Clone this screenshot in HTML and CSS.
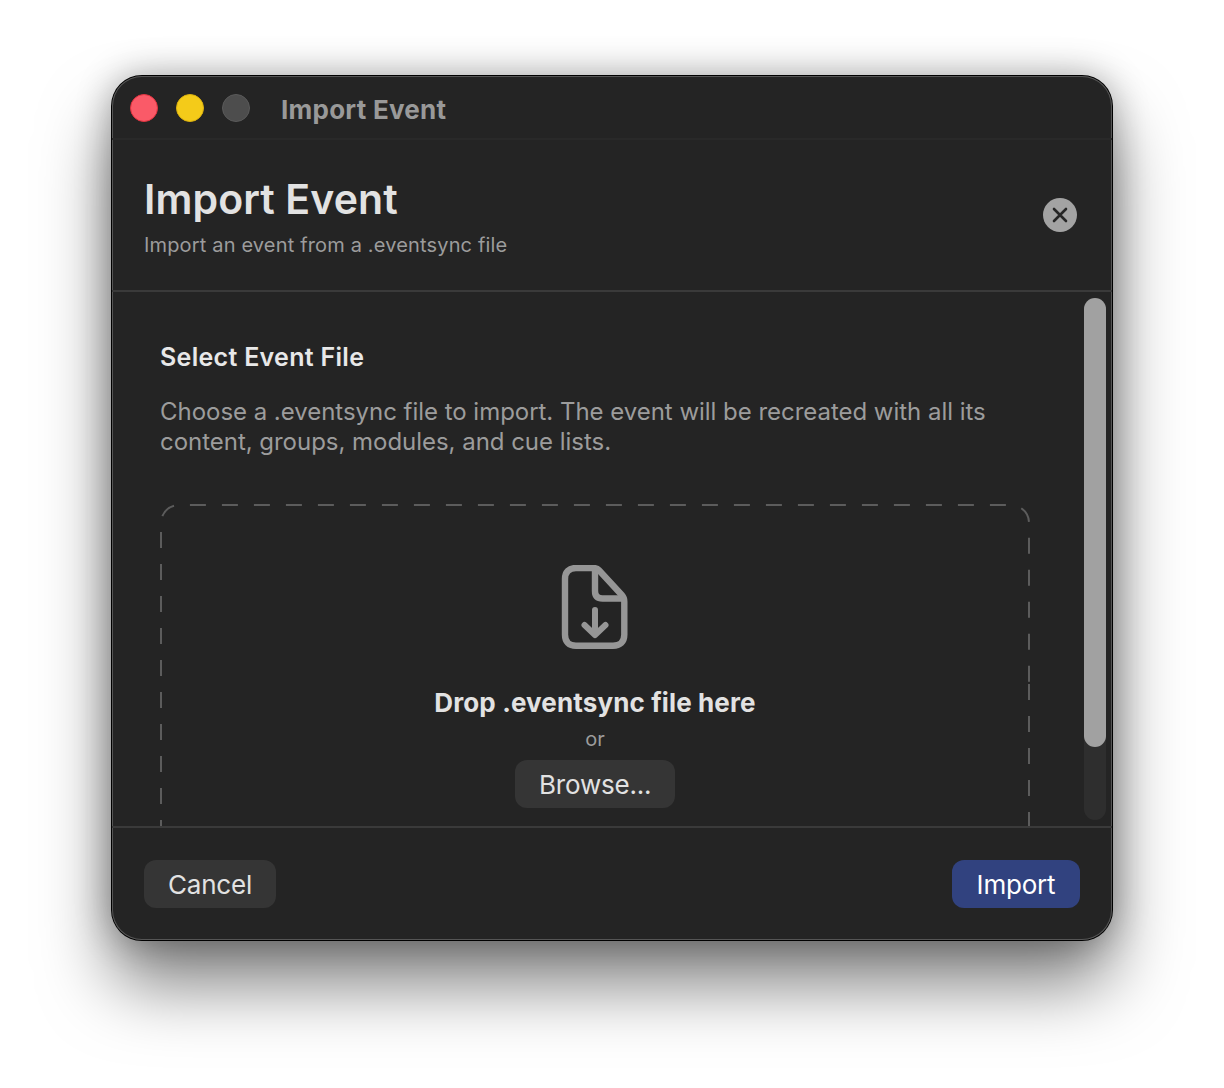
FILE: index.html
```html
<!DOCTYPE html>
<html lang="en">

<head>
    <meta charset="UTF-8" />
    <title>Import Event</title>
    <link rel="stylesheet" href="styles.css">
</head>

<body>
    <div class="window">
        <div class="titlebar">
            <span class="light light-close"></span>
            <span class="light light-min"></span>
            <span class="light light-max"></span>
            <span class="titlebar-text">Import Event</span>
        </div>

        <div class="header">
            <div class="header-text">
                <h1 class="header-title">Import Event</h1>
                <p class="header-sub">Import an event from a .eventsync file</p>
            </div>
            <button class="close-btn" aria-label="Close">
                <svg width="34" height="34" viewBox="0 0 34 34">
                    <path d="M11 11L23 23M23 11L11 23" fill="none" stroke="#262626" stroke-width="2.6" stroke-linecap="round" />
                </svg>
            </button>
        </div>

        <div class="content">
            <div class="scroll-area">
                <h2 class="section-title">Select Event File</h2>
                <p class="section-text">Choose a .eventsync file to import. The event will be recreated with all its content, groups, modules, and cue lists.</p>

                <div class="dropzone">
                    <svg class="dash-border" width="870" height="322" viewBox="160 504 870 322">
                        <path class="dash" d="M161 836V523A18 18 0 0 1 179 505H1011A18 18 0 0 1 1029 523V683" />
                        <path class="dash" d="M1029 684V836" />
                    </svg>
                    <svg class="file-icon" width="68" height="86" viewBox="0 0 68 86">
                        <path d="M15 3H32.500C35 3 36.500 3.700 38 5.300L60.800 30C62.600 32 63.300 33.500 63.300 36.500V69.800C63.300 77 59 80.800 52 80.800H15C8 80.800 4 77 4 69.800V14C4 7 8 3 15 3Z" fill="none" stroke="#969696" stroke-width="6.400" stroke-linejoin="round" />
                        <path d="M34 4V26C34 31 36.500 33.500 41.500 33.500H63" fill="none" stroke="#969696" stroke-width="6.400" />
                        <path d="M34 45V69.500M23.500 60L34 70L44.500 60" fill="none" stroke="#969696" stroke-width="6" stroke-linecap="round" stroke-linejoin="round" />
                    </svg>
                    <div class="drop-title">Drop .eventsync file here</div>
                    <div class="drop-or">or</div>
                    <button class="btn btn-grey btn-browse">Browse...</button>
                </div>
            </div>
            <div class="scrollbar">
                <div class="scrollbar-thumb"></div>
            </div>
        </div>

        <div class="footer">
            <button class="btn btn-grey btn-cancel">Cancel</button>
            <button class="btn btn-primary">Import</button>
        </div>
    </div>
</body>

</html>
```

FILE: styles.css
```css
* {
    box-sizing: border-box;
}

html,
body {
    margin: 0;
    height: 1088px;
    background: #fff;
    overflow: hidden;
}

body {
    padding: 76px 112px 148px;
    font-family: Inter, "Noto Sans", sans-serif;
}

p,
h1,
h2 {
    margin: 0;
}

.window {
    display: flex;
    flex-direction: column;
    height: 864px;
    border-radius: 30px;
    background: #242424;
    overflow: hidden;
    box-shadow: 0 0 0 1px #555 inset, 0 0 0 1px #000, 0 44px 70px rgba(0, 0, 0, 0.5), 0 0 36px rgba(0, 0, 0, 0.32);
}

.titlebar {
    display: flex;
    align-items: center;
    flex: none;
    gap: 18px;
    height: 64px;
    padding: 2px 18px 0;
    border-bottom: 2px solid #292929;
}

.light {
    width: 28px;
    height: 28px;
    border-radius: 50%;
}

.light-close {
    background: #fa5a68;
    border: 1px solid #e2333f;
}

.light-min {
    background: #f4cb19;
    border: 1px solid #dcb20f;
}

.light-max {
    background: #4d4d4d;
    border: 1px solid #5a5a5a;
}

.titlebar-text {
    margin: 2px 0 0 13px;
    font-size: 26px;
    font-weight: 700;
    letter-spacing: 0.25px;
    color: #999;
}

.header {
    display: flex;
    align-items: center;
    justify-content: space-between;
    flex: none;
    height: 152px;
    padding: 0 35px 0 32px;
    border-bottom: 2px solid #3a3a3a;
}

.header-text {
    margin-top: 2px;
}

.header-title {
    font-size: 41px;
    line-height: 48px;
    font-weight: 600;
    letter-spacing: 0.1px;
    color: #e2e2e2;
}

.header-sub {
    margin-top: 10px;
    font-size: 20px;
    line-height: 24px;
    letter-spacing: 0.16px;
    color: #9c9c9c;
}

.close-btn {
    display: flex;
    width: 34px;
    height: 34px;
    padding: 0;
    border: none;
    border-radius: 50%;
    background: #a3a3a3;
}

.content {
    display: flex;
    flex: 1;
    min-height: 0;
}

.scroll-area {
    flex: 1;
    min-width: 0;
    padding: 49px 0 0 48px;
    overflow: hidden;
}

.section-title {
    font-size: 25px;
    line-height: 32px;
    font-weight: 600;
    letter-spacing: 0.3px;
    color: #e8e8e8;
}

.section-text {
    width: 860px;
    margin-top: 24px;
    font-size: 24px;
    line-height: 30px;
    letter-spacing: -0.03px;
    color: #9c9c9c;
}

.dropzone {
    position: relative;
    display: flex;
    flex-direction: column;
    align-items: center;
    width: 870px;
    margin-top: 47px;
    padding-top: 61px;
}

.dash-border {
    position: absolute;
    top: 0;
    left: 0;
}

.dash {
    fill: none;
    stroke: #5c5c5c;
    stroke-width: 2;
    stroke-dasharray: 16 16;
}

.drop-title {
    margin-top: 35px;
    font-size: 26px;
    line-height: 34px;
    font-weight: 700;
    letter-spacing: 0.12px;
    color: #e2e2e2;
}

.drop-or {
    margin-top: 7px;
    font-size: 20px;
    line-height: 24px;
    color: #9c9c9c;
}

.btn {
    height: 48px;
    padding: 0 24px;
    border: none;
    border-radius: 12px;
    font-family: inherit;
    font-size: 26px;
    letter-spacing: -0.2px;
}

.btn-grey {
    background: #353535;
    color: #e2e2e2;
}

.btn-browse {
    width: 160px;
    margin-top: 9px;
}

.btn-cancel {
    width: 132px;
}

.btn-primary {
    width: 128px;
    background: #31427f;
    color: #fff;
}

.scrollbar {
    flex: none;
    width: 22px;
    height: 522px;
    margin: 6px 6px 0 0;
    border-radius: 11px;
    background: #2e2e2e;
}

.scrollbar-thumb {
    height: 449px;
    border-radius: 11px;
    background: #a1a1a1;
}

.footer {
    display: flex;
    align-items: center;
    justify-content: space-between;
    flex: none;
    height: 114px;
    padding: 0 32px;
    border-top: 2px solid #3a3a3a;
}
```
